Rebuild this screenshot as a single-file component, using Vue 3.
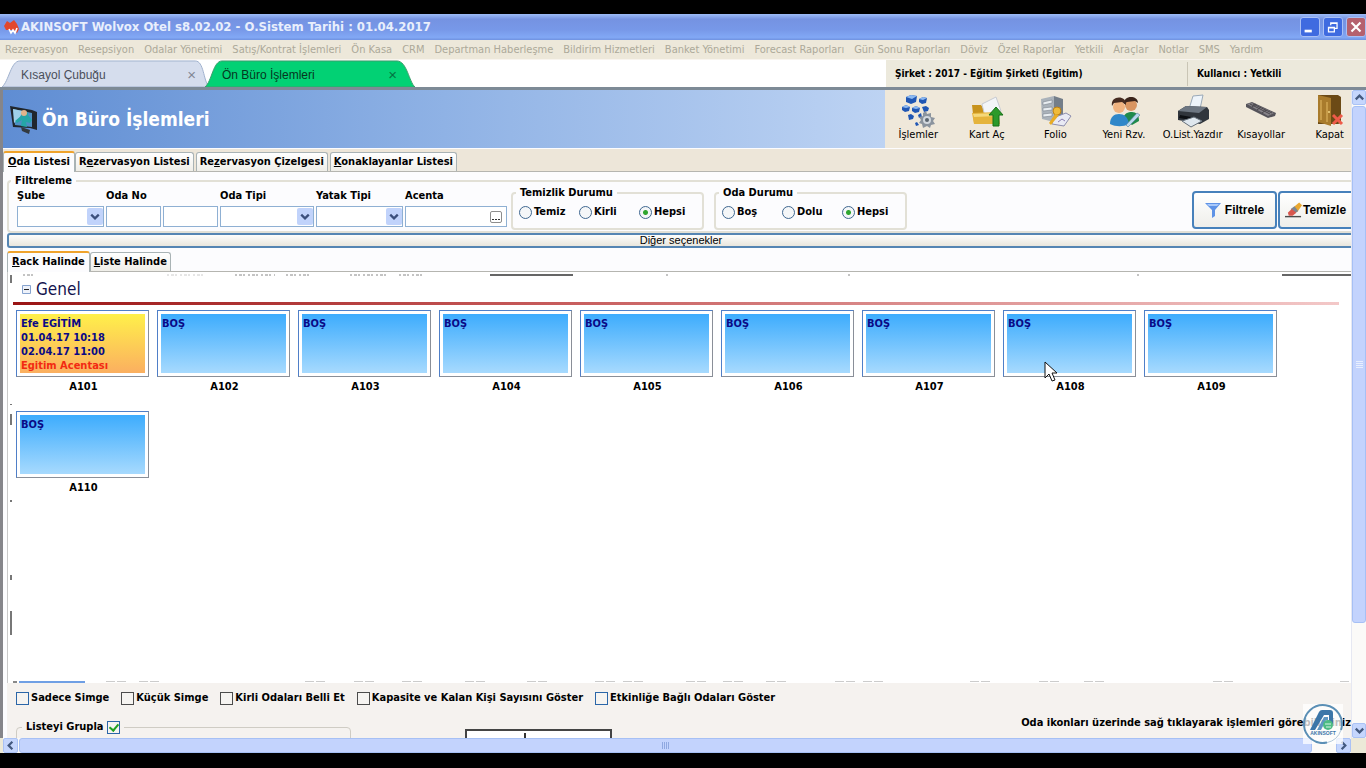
<script setup>
import { ref } from 'vue'

const menu = ['Rezervasyon', 'Resepsiyon', 'Odalar Yönetimi', 'Satış/Kontrat İşlemleri', 'Ön Kasa', 'CRM', 'Departman Haberleşme', 'Bildirim Hizmetleri', 'Banket Yönetimi', 'Forecast Raporları', 'Gün Sonu Raporları', 'Döviz', 'Özel Raporlar', 'Yetkili', 'Araçlar', 'Notlar', 'SMS', 'Yardım']

const pages = [
  { pre: '', key: 'O', post: 'da Listesi' },
  { pre: 'R', key: 'e', post: 'zervasyon Listesi' },
  { pre: 'Re', key: 'z', post: 'ervasyon Çizelgesi' },
  { pre: '', key: 'K', post: 'onaklayanlar Listesi' },
]
const views = [
  { key: 'R', post: 'ack Halinde' },
  { key: 'L', post: 'iste Halinde' },
]

const clean = ref('Hepsi')
const state = ref('Hepsi')

const rooms = [
  { no: 'A101', busy: true, lines: ['Efe EGİTİM', '01.04.17 10:18', '02.04.17 11:00'], agency: 'Egitim Acentası' },
  ...['A102', 'A103', 'A104', 'A105', 'A106', 'A107', 'A108', 'A109', 'A110'].map((no) => ({ no, busy: false, lines: ['BOŞ'] })),
]

const options = [
  { id: 'simge', text: 'Sadece Simge', blue: true },
  { id: 'kucuk', text: 'Küçük Simge' },
  { id: 'kirli', text: 'Kirli Odaları Belli Et' },
  { id: 'kapasite', text: 'Kapasite ve Kalan Kişi Sayısını Göster' },
  { id: 'etkinlik', text: 'Etkinliğe Bağlı Odaları Göster', blue: true },
]

const topMarks = [[10, 20], [222, 262], [273, 296], [337, 376], [386, 410], [653, 656], [835, 838], [1124, 1128]]
const bottomMarks = [93, 126, 292, 341, 389, 452, 514, 582, 610, 673, 710, 753, 822, 850, 957, 1026, 1071, 1200, 1327]
const sideMarks = [[2, 8], [131, 1], [141, 11], [227, 2], [302, 5], [338, 24]]
</script>

<template>
  <div class="screen">
    <header class="titlebar">
      <svg class="app-icon" viewBox="0 0 16 16" width="16" height="16">
        <path d="M1 7 4 2l3 2 4-3 3 4 2 5-2 4-3-3H3z" fill="#e2472c" />
        <path d="m6 10 2 4 2-3 2 3 2-5" fill="none" stroke="#fff" stroke-width="1.600" />
      </svg>
      <h1>AKINSOFT Wolvox Otel s8.02.02 - O.Sistem Tarihi : 01.04.2017</h1>
      <div class="window-buttons">
        <button type="button" aria-label="Küçült"><svg viewBox="0 0 20 20"><path d="M4 13h8v3H4z" fill="#fff" /></svg></button>
        <button type="button" aria-label="Geri yükle">
          <svg viewBox="0 0 20 20" fill="none" stroke="#fff"><path d="M7.500 8V5.500h7v6H12M5 10.500h6.500v5H5zM7 6h8M5 11h7" stroke-width="1.400" /></svg>
        </button>
        <button type="button" class="close" aria-label="Kapat"><svg viewBox="0 0 20 20"><path d="m5 5 10 10M15 5 5 15" stroke="#fff" stroke-width="2.400" /></svg></button>
      </div>
    </header>

    <nav class="menu"><button v-for="m in menu" :key="m" type="button">{{ m }}</button></nav>

    <div class="strip">
      <div class="doc-tab">
        <svg viewBox="0 0 210 28" preserveAspectRatio="none"><path d="M0 28C7 22 9 1 18 1h178c9 0 8 20 14 27z" fill="#d5dded" stroke="#9eb0cd" /></svg>
        <div><button type="button">Kısayol Çubuğu</button><button type="button" class="x" aria-label="Kısayol Çubuğu sekmesini kapat">×</button></div>
      </div>
      <div class="doc-tab active">
        <svg viewBox="0 0 210 28" preserveAspectRatio="none"><path d="M0 28C7 22 8 1 17 1h175c10 0 12 22 18 27z" fill="#02d174" stroke="#3f9b6c" /></svg>
        <div><button type="button">Ön Büro İşlemleri</button><button type="button" class="x" aria-label="Ön Büro İşlemleri sekmesini kapat">×</button></div>
      </div>
      <div class="session">
        <span>Şirket : 2017 - Eğitim Şirketi (Egitim)</span>
        <span>Kullanıcı : Yetkili</span>
      </div>
    </div>

    <div class="workspace">
      <main class="page">
        <div class="banner">
          <div class="heading">
            <svg width="28" height="32" viewBox="0 0 28 32">
              <path d="m0 3 22 4 5 2v18l-7-2L3 24z" fill="#20262c" />
              <path d="m3 6 19 4v14L5 22z" fill="#4e8fc4" />
              <path d="m3 6 10 2-4 8-5 4z" fill="#9fd0ea" />
              <path d="M12 10c3-3 7-1 6 2l4 5-2 3-4-1 1 5-6-1 1-6-5 3-2-2 6-5z" fill="#25a6a8" />
              <circle cx="14" cy="10" r="3" fill="#e2b48c" />
              <path d="m11 24 9 3-1 4-7-3z" fill="#333a40" />
            </svg>
            <h2>Ön Büro İşlemleri</h2>
          </div>
          <div class="toolbar">
            <div class="tools">
              <button type="button">
                <svg viewBox="0 0 34 34">
                  <g fill="#1f56b4"><path d="m5 3 5-2 6 1-1 6-5 2-5-2z" /><path d="m18 5 4-2 4 1-1 5-4 1-3-2z" /><path d="m1 13 4-2 4 2-1 4-4 1-3-2z" /><path d="m11 14 4-2 4 2-1 4-4 1-3-2z" /><path d="m21 13 4-1 3 2-1 3-4 1zM7 21l3-1 3 2-1 3-4 1zM17 21l3-2 1 4-3 1zM14 29l2-1 2 3-3 1z" /></g>
                  <g fill="#8db9f0"><path d="m5 3 5-2 6 1-5 3zM18 5l4-2 4 1-4 2zM1 13l4-2 4 2-4 1zM11 14l4-2 4 2-4 1z" /></g>
                  <path d="m22 19 3-2 1 3 4-1v4l4 1-2 3 2 3-4 1-1 3-3-2-4 2-1-4-3-1 2-3-2-3 4-1z" fill="#8b949e" />
                  <circle cx="26" cy="26" r="4" fill="#d2d8de" /><circle cx="26" cy="26" r="2" fill="#5c6670" />
                </svg>İşlemler
              </button>
              <button type="button">
                <svg viewBox="0 0 34 34">
                  <path d="M2 11h9l2 3h15v15H4z" fill="#c8931c" />
                  <path d="m12 10 14-7 5 14-16 6z" fill="#f3f5f8" stroke="#c7cbd2" />
                  <path d="m2 19 26-1 2 12H4z" fill="#e5b43c" /><path d="m3 20 25-1v3L4 23z" fill="#f5d87a" />
                  <path d="m26 13 7 8h-4v11h-6V21h-4z" fill="#2c9a2a" stroke="#177017" />
                </svg>Kart Aç
              </button>
              <button type="button">
                <svg viewBox="0 0 34 34">
                  <path d="m3 5 13-3v26L4 25z" fill="#aab2ba" /><path d="m16 2 9 3v20l-9 3z" fill="#747e89" />
                  <path d="m5 8 9-2v3l-9 2zm0 6 9-1v3l-9 1zm0 6 9-1v3l-9 1z" fill="#e8edf1" stroke="#6f7780" stroke-width="0.500" />
                  <path d="m15 24 13-5 5 3-7 10-12-2z" fill="#e9eaf4" stroke="#8e8fae" />
                  <circle cx="19" cy="17" r="4" fill="#efbb3a" stroke="#bd8115" /><path d="m17 20-6 9 2 2 8-10z" fill="#e8ac25" />
                  <path d="m20 28 4-3 3 2" stroke="#8b7eb2" fill="none" />
                </svg>Folio
              </button>
              <button type="button">
                <svg viewBox="0 0 34 34">
                  <path d="M16 25c1-6 5-7 9-7s7 3 7 9l-7 4z" fill="#1e8a4c" />
                  <circle cx="24" cy="11" r="6" fill="#d99561" /><path d="M17 10c-1-9 14-9 14-1l-3-2-8 1z" fill="#3b241b" />
                  <path d="M3 30c0-7 4-10 9-10s9 3 10 10c-6 3-13 3-19 0z" fill="#2f87c9" />
                  <circle cx="12" cy="13" r="6" fill="#f0b380" /><path d="M5 12c-2-11 15-11 14-1l-4-3-8 1z" fill="#462b20" />
                  <path d="m19 31 11-12 3 2-12 12z" fill="#b8d8ee" stroke="#577d9c" stroke-width="0.600" />
                </svg>Yeni Rzv.
              </button>
              <button type="button">
                <svg viewBox="0 0 34 34">
                  <path d="m13 15 4-13 10-1-3 14z" fill="#eef4fa" stroke="#9aa9b8" />
                  <path d="m2 17 8-5 21 1 2 3v9l-9 5L2 26z" fill="#30353c" /><path d="m2 17 8-5 21 1-8 6z" fill="#6d7681" />
                  <path d="m4 21 17 3v3L3 24z" fill="#0d1014" /><path d="m6 27 12-4 8 4-11 6z" fill="#dfe7ee" stroke="#66707a" />
                </svg>O.List.Yazdır
              </button>
              <button type="button">
                <svg viewBox="0 0 34 34">
                  <path d="m2 10 6-2 24 11-1 3-7 2L2 13z" fill="#55535a" /><path d="m3 10 5-1 22 10-6 3z" fill="#858288" />
                  <path d="m6 10 20 10M9 10l19 9M8 13l4-3m1 6 4-3m1 6 4-3" stroke="#4a474c" />
                </svg>Kısayollar
              </button>
              <button type="button">
                <svg viewBox="0 0 34 34">
                  <path d="M5 1h20l3 2v26l-3 1H5z" fill="#6c4a16" /><path d="m5 1 13 3v28L5 28z" fill="#a97b2c" />
                  <path d="M8 6v20m6-18v20" stroke="#c79b48" stroke-width="2" /><circle cx="16" cy="18" r="1" fill="#f2d485" />
                  <path d="m20 21 9 9m0-9-9 9" stroke="#ef5b4a" stroke-width="3" />
                </svg>Kapat
              </button>
            </div>
          </div>
        </div>

        <div class="tabs page-tabs">
          <button v-for="(p, i) in pages" :key="p.post" type="button" :class="{ on: i === 0 }">{{ p.pre }}<u>{{ p.key }}</u>{{ p.post }}</button>
        </div>

        <div class="sheet">
          <fieldset class="filter">
            <legend>Filtreleme</legend>
            <div class="filter-row">
              <div class="field w-sube">
                <label for="sube">Şube</label>
                <span class="combo"><select id="sube"><option></option></select><svg viewBox="0 0 16 18"><path d="m4 7 4 4 4-4" /></svg></span>
              </div>
              <div class="field w-no"><label for="oda1">Oda No</label><input id="oda1" type="text"></div>
              <div class="field w-no"><input type="text" aria-label="Oda No bitiş"></div>
              <div class="field w-tip">
                <label for="tip">Oda Tipi</label>
                <span class="combo"><select id="tip"><option></option></select><svg viewBox="0 0 16 18"><path d="m4 7 4 4 4-4" /></svg></span>
              </div>
              <div class="field w-sube">
                <label for="yatak">Yatak Tipi</label>
                <span class="combo"><select id="yatak"><option></option></select><svg viewBox="0 0 16 18"><path d="m4 7 4 4 4-4" /></svg></span>
              </div>
              <div class="field w-acenta">
                <label for="acenta">Acenta</label>
                <span class="lookup"><input id="acenta" type="text"><button type="button" aria-label="Acenta seç"><i></i><i></i><i></i></button></span>
              </div>
              <fieldset class="radios first">
                <legend>Temizlik Durumu</legend>
                <div>
                  <label v-for="r in ['Temiz', 'Kirli', 'Hepsi']" :key="r"><input v-model="clean" type="radio" name="clean" :value="r">{{ r }}</label>
                </div>
              </fieldset>
              <fieldset class="radios">
                <legend>Oda Durumu</legend>
                <div>
                  <label v-for="r in ['Boş', 'Dolu', 'Hepsi']" :key="r"><input v-model="state" type="radio" name="state" :value="r">{{ r }}</label>
                </div>
              </fieldset>
              <div class="actions">
                <button type="button">
                  <svg width="16" height="16" viewBox="0 0 16 16"><path d="M0 1h16L10 8v6l-3 2V8z" fill="#5f93e6" /><path d="M2 2h12l-2 2H4z" fill="#a9c9fa" /></svg>Filtrele
                </button>
                <button type="button" class="wipe">
                  <svg width="17" height="16" viewBox="0 0 18 16">
                    <path d="M0 15h17" stroke="#4c4c4c" stroke-width="1.500" /><path d="m9 5 6-5 3 3-5 7z" fill="#e9a72f" />
                    <path d="m6 7 4-3 4 5-4 3z" fill="#7d8590" /><path d="m3 11 4-4 5 4-4 3H4z" fill="#d8574e" />
                  </svg>Temizle
                </button>
              </div>
            </div>
          </fieldset>

          <button type="button" class="more">Diğer seçenekler</button>

          <div class="tabs view-tabs">
            <button v-for="(v, i) in views" :key="v.post" type="button" :class="{ on: i === 0 }"><u>{{ v.key }}</u>{{ v.post }}</button>
          </div>

          <section class="rack">
            <svg class="side" width="2" height="400">
              <rect v-for="m in sideMarks" :key="m[0]" x="0" :y="m[0]" width="2" :height="m[1]" fill="#777" />
            </svg>
            <svg class="marks" height="2">
              <line v-for="m in topMarks" :key="m[0]" :x1="m[0]" y1="1" :x2="m[1]" y2="1" class="faint" />
              <line x1="154" y1="1" x2="192" y2="1" class="faint pale" />
              <rect x="477" y="0" width="83" height="2" fill="#666" />
              <rect x="1269" y="0" width="80" height="2" fill="#666" />
            </svg>
            <h3>
              <button type="button" class="collapse" aria-label="Grubu daralt"><svg width="9" height="9" viewBox="0 0 9 9"><path d="M0.500 0.500h8v8h-8z" fill="#eef2fa" stroke="#86a3cf" /><path d="M2 4.500h5" stroke="#222" /></svg></button>
              Genel
            </h3>
            <hr>
            <div class="rooms">
              <div v-for="r in rooms" :key="r.no" class="room">
                <div class="card"><div class="fill" :class="{ busy: r.busy }">
                  <p v-for="l in r.lines" :key="l">{{ l }}</p>
                  <p v-if="r.agency" class="agency">{{ r.agency }}</p>
                </div></div>
                <span>{{ r.no }}</span>
                <svg v-if="r.no === 'A108'" class="cursor" width="14" height="22" viewBox="0 0 14 22"><path d="M1 1v16l4-4 3 7 3-1-3-7h5z" fill="#fff" stroke="#111" /></svg>
              </div>
            </div>
            <svg class="marks bottom" height="2">
              <rect x="0" y="0" width="4" height="2" fill="#888" /><rect x="6" y="0" width="66" height="2" fill="#6f9fe4" />
              <g v-for="x in bottomMarks" :key="x" fill="#ccc"><rect :x="x" y="0" width="9" height="1" /><rect :x="x + 11" y="0" width="9" height="1" /></g>
            </svg>
          </section>

          <footer class="settings">
            <div class="checks">
              <label v-for="o in options" :key="o.id"><input type="checkbox" :class="{ blue: o.blue }">{{ o.text }}</label>
            </div>
            <div class="lower">
              <fieldset class="group">
                <legend><label for="grupla">Listeyi Grupla</label><input id="grupla" type="checkbox" class="blue" checked></legend>
              </fieldset>
              <div class="legend-box"></div>
              <p>Oda ikonları üzerinde sağ tıklayarak işlemleri görebilirsiniz</p>
            </div>
          </footer>
        </div>
      </main>

      <div class="vbar">
        <button type="button" aria-label="Yukarı"><svg viewBox="0 0 14 14"><path d="m3 9 4-4 4 4" /></svg></button>
        <div class="thumb"><i></i><i></i><i></i><i></i></div>
        <div class="track"></div>
        <button type="button" aria-label="Aşağı"><svg viewBox="0 0 14 14"><path d="m3 5 4 4 4-4" /></svg></button>
      </div>
      <div class="hbar">
        <button type="button" aria-label="Sola"><svg viewBox="0 0 14 14"><path d="M9 3 5 7l4 4" /></svg></button>
        <div class="thumb"><i></i><i></i><i></i><i></i></div>
        <div class="track"></div>
        <button type="button" aria-label="Sağa"><svg viewBox="0 0 14 14"><path d="m5 3 4 4-4 4" /></svg></button>
      </div>
      <svg class="brand" width="40" height="40" viewBox="0 0 40 40">
        <path d="M0 0h40v40H0z" fill="#fff" fill-opacity="0.750" />
        <path d="M24 38.600A19 19 0 1 1 38 26" fill="none" stroke="#5b8fb5" stroke-width="2" />
        <path d="M38 26a19 19 0 0 1-14 12.600" fill="none" stroke="#b4cadb" />
        <path d="M7 26 16 8q1-2 3-2h8q3 0 3 3v11h-4v-9h-5L12 26z" fill="#3c76a8" /><path d="m14 26 7-13h4v3h-2l-5 10z" fill="#5f97c2" />
        <circle cx="25" cy="21" r="5" fill="#4dbb83" /><path d="M22 20h6m-5 3h5" stroke="#d9f4e5" />
        <text x="20" y="31" text-anchor="middle">AKINSOFT</text>
      </svg>
    </div>
  </div>
</template>

<style>
body { margin: 0; background: #000; }
</style>

<style scoped>
* { box-sizing: border-box; }
.screen {
  display: flex; flex-direction: column; min-height: 100vh; padding: 14px 0 15px; background: #000; color: #000;
  font: 11px/14px Tahoma, "DejaVu Sans Condensed", "Noto Sans", sans-serif; overflow: hidden;
}
button, input, select { font: inherit; color: inherit; margin: 0; padding: 0; border: 0; background: none; }
h1, h2, h3, p { margin: 0; font-weight: bold; }
button { white-space: nowrap; }

.titlebar { display: flex; align-items: center; height: 26px; padding: 0 0 0 3px; background: linear-gradient(#9dbcf7, #7593e2 20%, #7798e8 60%, #82a8f5 90%, #6f92e0); }
.titlebar h1 { flex: 1; margin-left: 2px; font-size: 13px; line-height: 16px; color: #e9effc; }
.window-buttons { display: flex; gap: 3px; }
.window-buttons button { width: 20px; height: 20px; border: 1px solid #a9c0f5; border-radius: 3px; background: #3f6be0; }
.window-buttons .close { background: #b5616e; }
.window-buttons svg { display: block; width: 18px; height: 18px; }

.menu { display: flex; gap: 10px; height: 20px; padding-left: 5px; background: #ede8da; border-bottom: 1px solid #f8f4ee; color: #aca899; }

.strip { display: flex; height: 30px; background: #fff; border-bottom: 3px solid #7d8a96; padding-left: 2px; }
.doc-tab { display: grid; width: 207px; font: 12px/16px "Liberation Sans", Arial, sans-serif; color: #4a4f5a; }
.doc-tab > * { grid-area: 1 / 1; width: 100%; height: 27px; }
.doc-tab > div { display: flex; align-items: center; justify-content: space-between; padding: 2px 13px 0 19px; }
.doc-tab.active { margin-left: -4px; width: 210px; color: #06361f; }
.doc-tab.active > div { padding-left: 17px; padding-right: 18px; }
.doc-tab .x { font-size: 15px; opacity: 0.6; }
.session { display: flex; align-items: center; width: 480px; margin-left: auto; background: #ece9dc; font-weight: bold; font-size: 10px; }
.session span { padding: 0 9px; line-height: 24px; }
.session span:first-child { width: 302px; border-right: 1px solid #c9c5b5; }

.workspace { position: relative; flex: 1; display: grid; grid-template: minmax(0, 1fr) 15px / minmax(0, 1fr) 15px; background: #ece9d8; }
.page { display: flex; flex-direction: column; min-width: 0; border-left: 3px solid #85858a; overflow: hidden; background: #fcfcfe; }
.banner { display: flex; height: 58px; }
.heading { flex: 1; display: flex; align-items: center; gap: 4px; padding-left: 7px; background: linear-gradient(90deg, #5f8dd3, #8fb2e5 50%, #bdd3f3); }
.heading h2 { font-size: 19px; line-height: 24px; color: #fff; }
.toolbar { width: 466px; overflow: hidden; background: #efe8da; }
.tools { display: grid; grid-template-columns: repeat(7, 1fr); width: 480px; margin-left: -1px; padding-top: 4px; }
.tools button { display: flex; flex-direction: column; align-items: center; }
.tools svg { width: 34px; height: 34px; }

.tabs { display: flex; align-items: flex-end; font-weight: bold; border-bottom: 1px solid #b5b5b0; }
.tabs button { height: 19px; padding: 0 3px; border: 1px solid #a9b3b5; border-bottom: 0; border-radius: 3px 3px 0 0; background: linear-gradient(#fff, #efeee8); font-weight: bold; }
.tabs .on { height: 21px; margin-bottom: -1px; padding: 0 4px 2px; border-top: 2px solid #efa32c; background: #fcfcfe; }
.page-tabs { height: 23px; margin-top: 1px; background: #ede6d9; }
.page-tabs button + button { margin-right: 2px; }

.sheet { flex: 1; display: flex; flex-direction: column; min-width: 0; padding-left: 4px; }
fieldset { min-width: 0; margin: 0; padding: 0; border: 2px solid #e2e0d6; border-radius: 4px; }
legend { padding: 0 4px; font-weight: bold; line-height: 12px; }
.filter { margin-top: 3px; height: 58px; border-right: 0; border-radius: 4px 0 0 4px; }
.filter > legend { margin-left: 2px; }
.filter-row { display: flex; gap: 2px; padding-left: 8px; font-weight: bold; }
.field { display: flex; flex-direction: column; justify-content: flex-end; height: 40px; }
.field label { height: 18px; line-height: 16px; }
.field input, .field select { width: 100%; height: 21px; border: 1px solid #8fb0d3; background: #fff; appearance: none; }
.w-sube { width: 87px; } .w-no { width: 55px; } .w-tip { width: 94px; } .w-acenta { width: 102px; }
.combo, .lookup { display: grid; }
.combo > *, .lookup > * { grid-area: 1 / 1; }
.combo svg { justify-self: end; align-self: center; width: 16px; height: 17px; margin-right: 1px; border-radius: 2px; background: #c1d3fb; pointer-events: none; fill: none; stroke: #3b4f7c; stroke-width: 2.4; }
.lookup button { display: flex; gap: 1px; justify-content: center; align-items: flex-end; justify-self: end; align-self: center; width: 12px; height: 12px; margin-right: 5px; padding-bottom: 2px; border: 1px solid #8d8d8d; border-radius: 2px; }
.lookup i { width: 2px; height: 1px; background: #333; }
.radios { width: 193px; height: 43px; margin-left: 8px; }
.radios.first { margin-left: 2px; }
.radios legend { margin-left: 3px; }
.radios > div { display: grid; grid-template-columns: 60px 60px 1fr; padding: 6px 0 0 6px; }
.radios label { display: flex; align-items: center; gap: 2px; }
input[type="radio"] { appearance: none; width: 13px; height: 13px; border: 1px solid #3f6790; border-radius: 50%; background: #f4f6f8; }
input[type="radio"]:checked { background: radial-gradient(circle, #2fa62f 0 2px, #f4f6f8 3px); }
.actions { display: flex; gap: 1px; width: 159px; margin-left: auto; padding-top: 4px; overflow: hidden; }
.actions button { display: flex; flex: none; align-items: center; justify-content: center; gap: 4px; width: 85px; height: 38px; border: 2px solid #4781bb; border-radius: 4px; background: linear-gradient(#fff, #efeeea); font: bold 12px/14px "Liberation Sans", Arial, sans-serif; }
.actions .wipe { justify-content: flex-start; gap: 1px; padding-left: 5px; }

.more { height: 15px; margin-right: -4px; border: 2px solid #5585b3; border-radius: 3px; background: linear-gradient(#fdfdfc, #e9e6dd); font: 11px/11px "Liberation Sans", Arial, sans-serif; }
.view-tabs { height: 24px; margin-right: -4px; }

.rack { position: relative; flex: 1; display: flex; flex-direction: column; padding: 2px 0 0 5px; background: #fff; border-left: 1px solid #c9c9c9; }
.side { position: absolute; left: 2px; top: 1px; }
.marks { display: block; width: 100%; }
.marks.bottom { margin-top: auto; }
.faint { stroke: #888; stroke-width: 1; stroke-dasharray: 2 2 3 1 2 3; }
.faint.pale { stroke: #ccc; }
.rack h3 { display: flex; align-items: center; gap: 5px; padding-left: 9px; height: 26px; font-size: 17px; line-height: 22px; font-weight: normal; color: #14144e; }
.collapse { display: flex; }
.rack hr { width: calc(100% - 12px); height: 3px; margin: 0; border: 0; background: linear-gradient(90deg, #9a1414, #c65a5a 40%, #f3c8c8); }
.rooms { display: flex; flex-wrap: wrap; gap: 14px 8px; padding: 5px 3px; }
.room { position: relative; width: 133px; text-align: center; font-weight: bold; }
.room > span { display: block; height: 20px; padding: 3px 0 0 2px; }
.card { height: 67px; padding: 3px; border: 1px solid; border-color: #4f7fc8 #8a8f98 #8a8f98 #4f7fc8; background: #fff; }
.fill { height: 59px; padding: 3px 1px 0; overflow: hidden; text-align: left; color: #0a0a86; background: linear-gradient(#3dacfd, #a7dafe); }
.fill.busy { background: linear-gradient(#fff04a, #fbaf60); }
.agency { color: #f22a12; }
.cursor { position: absolute; left: 41px; top: 51px; }

.settings { height: 55px; padding: 8px 0 0 9px; overflow: hidden; background: #f5f2ef; font-weight: bold; }
.checks { display: flex; gap: 12px; }
.checks label { display: flex; align-items: center; gap: 2px; }
input[type="checkbox"] { appearance: none; width: 13px; height: 13px; border: 1px solid #4c4c4c; background: #f6f4f1; }
input[type="checkbox"].blue { border-color: #2b66a8; }
input[type="checkbox"]:checked::after { content: ""; display: block; width: 4px; height: 7px; margin: 0 0 0 3px; border: solid #21a121; border-width: 0 2px 2px 0; transform: rotate(40deg); }
.lower { display: flex; align-items: flex-start; padding-top: 9px; }
.group { width: 335px; height: 40px; margin-top: 6px; border-width: 1px; border-color: #cfccc4; }
.group legend { display: flex; align-items: center; gap: 3px; margin-left: 5px; line-height: 14px; }
.legend-box { width: 147px; height: 30px; margin: 15px 0 0 114px; border: 2px solid #444; background: linear-gradient(#333, #333) 57px 2px / 2px 30px no-repeat, #fff; }
.lower p { margin: 2px 0 0 auto; }

.vbar, .hbar { display: flex; background: #fbfaf8; }
.vbar { flex-direction: column; gap: 1px; border-left: 1px solid #e6e8f2; }
.hbar { gap: 1px; margin-left: 3px; }
.vbar button, .hbar button { flex: none; width: 15px; height: 15px; border: 1px solid #aac2f5; border-radius: 2px; background: #c5d6fd; }
.vbar button { width: 14px; }
.vbar button svg, .hbar button svg { display: block; width: 13px; height: 13px; fill: none; stroke: #43597f; stroke-width: 2.4; }
.thumb { display: flex; align-items: center; justify-content: center; border: 1px solid #a6c0f5; background: #c3d3fd; }
.vbar .thumb { flex-direction: column; gap: 1px; flex: 84; border-radius: 3px; }
.vbar .track { flex: 16; }
.vbar .thumb i { width: 7px; height: 1px; background: #e8effe; }
.hbar .thumb { gap: 1px; flex: 1; border-radius: 3px; }
.hbar .track { width: 22px; }
.hbar .thumb i { width: 1px; height: 7px; background: #8fa8e0; }
.brand { position: absolute; right: 23px; bottom: 9px; }
.brand text { font: bold 5px "Liberation Sans", sans-serif; fill: #3c76a8; }
</style>
